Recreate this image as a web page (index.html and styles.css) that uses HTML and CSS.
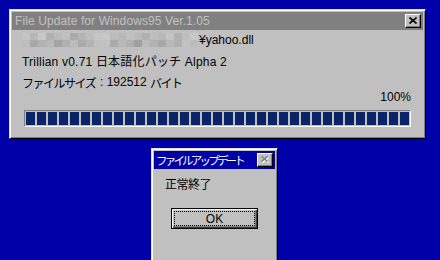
FILE: index.html
```html
<!DOCTYPE html>
<html lang="ja">
<head>
  <meta charset="UTF-8">
  <title>File Update for Windows95</title>
  <link rel="stylesheet" href="styles.css">
</head>
<body>
  <div class="window main-window">
    <div class="titlebar inactive">
      <span class="title">File Update for Windows95 Ver.1.05</span>
      <div class="close-btn">
        <svg width="8" height="7" viewBox="0 0 8 7"><path d="M0.5 0.5L7.5 6.5M7.5 0.5L0.5 6.5" stroke="#000" stroke-width="1.6"/></svg>
      </div>
    </div>
    <div class="content">
      <div class="row">
        <div class="mosaic" id="mosaic"></div>
        <span>¥yahoo.dll</span>
      </div>
      <div class="row line2">Trillian v0.71 日本語化パッチ Alpha 2</div>
      <div class="row line3"><span class="jp">ファイルサイズ</span> : 192512 <span class="jp">バイト</span></div>
      <div class="percent">100%</div>
      <div class="progress"><div class="progress-fill"></div></div>
    </div>
  </div>

  <div class="window dialog">
    <div class="titlebar active">
      <span class="title jp-title">ファイルアップデート</span>
      <div class="close-btn disabled">
        <svg width="9" height="8" viewBox="0 0 9 8"><path d="M1.5 1.5L7.5 6.5M7.5 1.5L1.5 6.5" stroke="#fff" stroke-width="1.6"/><path d="M0.5 0.5L6.5 5.5M6.5 0.5L0.5 5.5" stroke="#808080" stroke-width="1.6"/></svg>
      </div>
    </div>
    <div class="dialog-body">
      <div class="message">正常終了</div>
      <div class="ok-btn"><span class="focus">OK</span></div>
    </div>
  </div>

  <script>
    // blurred path: two rows of grey blocks
    const greys = [
      [196,184,200,176,186,192,170,180,190,198,200,188,184,192,186,176,190,184,196,178,190,200],
      [190,168,178,184,164,176,188,170,180,192,194,170,184,176,160,186,178,168,184,176,194,188]
    ];
    const mosaic = document.getElementById('mosaic');
    greys.forEach(row => {
      const r = document.createElement('div');
      r.className = 'mosaic-row';
      row.forEach(g => {
        const b = document.createElement('span');
        b.style.background = 'rgb(' + g + ',' + g + ',' + g + ')';
        r.appendChild(b);
      });
      mosaic.appendChild(r);
    });
  </script>
</body>
</html>
```

FILE: styles.css
```css
* {
  margin: 0;
  padding: 0;
  box-sizing: border-box;
}

body {
  background-color: #0000a8;
  font-family: 'Liberation Sans', 'Noto Sans CJK JP', sans-serif;
  font-size: 12px;
  color: #000;
  padding-top: 9px;
  height: 260px;
  overflow: hidden;
}

.window {
  background-color: #c0c0c0;
  border: 1px solid;
  border-color: #dfdfdf #000 #000 #dfdfdf;
  box-shadow: inset 1px 1px #fff, inset -1px -1px #808080;
  padding: 2px;
}

.main-window {
  margin-left: 9px;
  width: 417px;
}

.titlebar {
  height: 18px;
  display: flex;
  align-items: center;
  padding-left: 3px;
  padding-right: 2px;
}

.titlebar.inactive {
  background-color: #808080;
  color: #c0c0c0;
}

.titlebar.active {
  background-color: #0000a8;
  color: #fff;
  padding-left: 2px;
}

.title {
  flex: 1;
  white-space: nowrap;
  overflow: hidden;
  letter-spacing: 0.1px;
}

.jp {
  letter-spacing: -1.5px;
  margin-right: 1.5px;
}

.jp-title {
  font-size: 11.5px;
  letter-spacing: -2.8px;
}

.close-btn {
  flex-shrink: 0;
  width: 16px;
  height: 14px;
  background-color: #c0c0c0;
  border: 1px solid;
  border-color: #fff #000 #000 #fff;
  box-shadow: inset -1px -1px #808080;
  display: flex;
  align-items: center;
  justify-content: center;
  padding-bottom: 1px;
}

.content {
  padding: 1px 12px 9px 10px;
}

.row {
  height: 18px;
  display: flex;
  align-items: center;
  white-space: pre;
}

.line2 {
  margin-top: 2px;
  letter-spacing: 0.2px;
}

.line3 {
  margin-top: 4px;
}

.mosaic {
  display: flex;
  flex-direction: column;
  margin-right: 1px;
}

.mosaic-row {
  display: flex;
}

.mosaic-row span {
  width: 8px;
  height: 7px;
}

.percent {
  height: 13px;
  line-height: 13px;
  text-align: right;
}

.progress {
  margin: 6px 0 0 2px;
  height: 17px;
  border: 1px solid;
  border-color: #808080 #fff #fff #808080;
  padding: 1px;
}

.progress-fill {
  height: 100%;
  background: repeating-linear-gradient(to right, #0a2468 0 9px, #c0c0c0 9px 11px);
}

.dialog {
  margin: 9px 0 0 151px;
  width: 127px;
}

.dialog-body {
  padding: 9px 0 30px 0;
}

.message {
  height: 14px;
  line-height: 14px;
  padding-left: 11px;
  font-size: 12px;
  letter-spacing: -0.5px;
}

.ok-btn {
  margin: 16px 0 0 17px;
  width: 87px;
  height: 21px;
  border: 1px solid #000;
  box-shadow: inset 1px 1px #fff, inset -1px -1px #404040, inset -2px -2px #808080;
  display: flex;
  align-items: center;
  justify-content: center;
  padding: 2px;
}

.focus {
  width: 100%;
  height: 100%;
  border: 1px dotted #000;
  display: flex;
  align-items: center;
  justify-content: center;
  line-height: 1;
}
```
